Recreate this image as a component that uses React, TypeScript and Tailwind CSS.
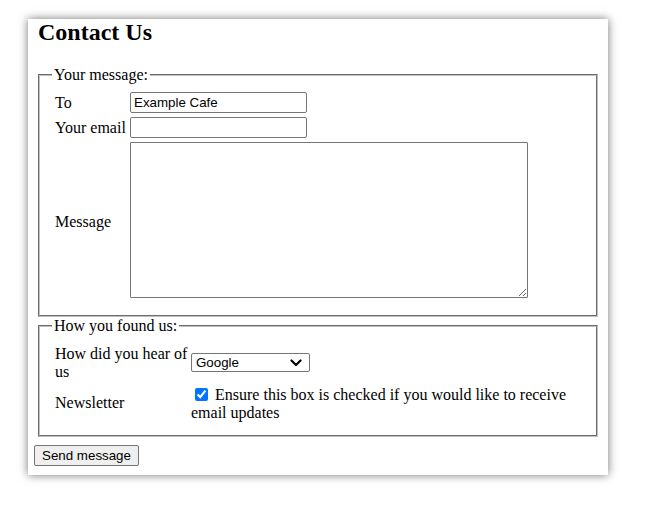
import { useState } from "react";

/* Plain contact form, browser-default look */

function Chevron() {
  return (
    <svg
      width="12"
      height="8"
      viewBox="0 0 12 8"
      fill="none"
      stroke="#000"
      strokeWidth="2.2"
      strokeLinecap="round"
      strokeLinejoin="round"
      className="pointer-events-none absolute right-[8px] top-[6px]"
    >
      <polyline points="1.5 1.5 6 6 10.5 1.5" />
    </svg>
  );
}

export default function App() {
  const [to, setTo] = useState("Example Cafe");
  const [email, setEmail] = useState("");
  const [message, setMessage] = useState("");
  const [source, setSource] = useState("google");
  const [newsletter, setNewsletter] = useState(true);

  const control =
    "border border-[#767676] rounded-[2px] bg-white font-['Liberation_Sans',Arial,sans-serif] text-[13.33px] leading-[normal] text-black";

  return (
    <div className="min-h-[513px] bg-white font-['Liberation_Serif','Times_New_Roman',serif] text-[16px] leading-[normal] text-black">
      <div className="pt-[19px] pl-[28px]">
        <div className="w-[580px] bg-white pl-[6px] pr-[10px] pb-[9px] shadow-[0_0_9px_rgba(0,0,0,0.55)]">
          <h2 className="ml-[4px] mb-[19.5px] text-[24px] font-bold leading-[normal]">
            Contact Us
          </h2>

          <form onSubmit={(e) => e.preventDefault()}>
            {/* Your message */}
            <fieldset className="ml-[4px] border-2 [border-style:groove] border-[#c0c0c0] px-[12px] pt-[5.6px] pb-[14px]">
              <legend className="px-[2px]">Your message:</legend>
              <div className="ml-[3px] mt-[3px] grid grid-cols-[73px_auto] gap-x-[2px] gap-y-[4px] items-center">
                <label htmlFor="to">To</label>
                <input
                  id="to"
                  value={to}
                  onChange={(e) => setTo(e.target.value)}
                  className={`${control} w-[177px] h-[21px] pl-[3px] pr-[2px]`}
                />
                <label htmlFor="email">Your email</label>
                <input
                  id="email"
                  type="email"
                  value={email}
                  onChange={(e) => setEmail(e.target.value)}
                  className={`${control} w-[177px] h-[21px] pl-[3px] pr-[2px]`}
                />
                <label htmlFor="message">Message</label>
                <div className="h-[159px]">
                  <textarea
                    id="message"
                    value={message}
                    onChange={(e) => setMessage(e.target.value)}
                    className="block w-[398px] h-[156px] border border-[#767676] rounded-[1px] bg-white p-[2px] font-['Liberation_Mono',monospace] text-[13.33px]"
                  />
                </div>
              </div>
            </fieldset>

            {/* How you found us */}
            <fieldset className="ml-[4px] border-2 [border-style:groove] border-[#c0c0c0] px-[12px] pt-[5.6px] pb-[13px]">
              <legend className="px-[2px]">How you found us:</legend>
              <div className="ml-[3px] mt-[4px] grid grid-cols-[134px_390px] gap-x-[2px] gap-y-[4px] items-center">
                <label htmlFor="source">How did you hear of us</label>
                <div className="relative w-[119px] h-[19px]">
                  <select
                    id="source"
                    value={source}
                    onChange={(e) => setSource(e.target.value)}
                    className={`${control} appearance-none w-[119px] h-[19px] pl-[4px] pr-[20px]`}
                  >
                    <option value="google">Google</option>
                    <option value="friend">A friend</option>
                    <option value="other">Other</option>
                  </select>
                  <Chevron />
                </div>
                <span>Newsletter</span>
                <label className="block">
                  <input
                    type="checkbox"
                    checked={newsletter}
                    onChange={(e) => setNewsletter(e.target.checked)}
                    className="ml-[4px] mr-[3px] my-[3px] w-[13px] h-[13px] align-[-1px] accent-[#0075ff]"
                  />{" "}
                  Ensure this box is checked if you would like to receive email updates
                </label>
              </div>
            </fieldset>

            <button
              type="submit"
              className="mt-[8px] w-[105px] h-[21px] border border-[#767676] rounded-[2px] bg-[#efefef] font-['Liberation_Sans',Arial,sans-serif] text-[13.33px] leading-[normal] text-black hover:bg-[#e5e5e5]"
            >
              Send message
            </button>
          </form>
        </div>
      </div>
    </div>
  );
}
